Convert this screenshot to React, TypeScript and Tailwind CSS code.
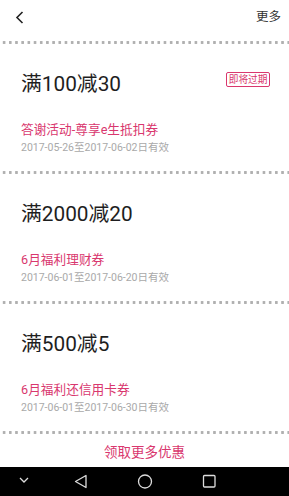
import React from "react";

const font = { fontFamily: 'Roboto, "Noto Sans CJK SC", "Noto Sans", sans-serif' };

function Dots() {
  return (
    <div className="h-[3px] w-full bg-[radial-gradient(circle,#b0b0b0_1.3px,transparent_1.7px)] bg-[length:6.2px_3px] bg-[position:1px_0px]" />
  );
}

type Coupon = { title: string; name: string; date: string; badge?: boolean };

const coupons: Coupon[] = [
  { title: "满100减30", name: "答谢活动-尊享e生抵扣券", date: "2017-05-26至2017-06-02日有效", badge: true },
  { title: "满2000减20", name: "6月福利理财券", date: "2017-06-01至2017-06-20日有效" },
  { title: "满500减5", name: "6月福利还信用卡券", date: "2017-06-01至2017-06-30日有效" },
];

function Card({ c }: { c: Coupon }) {
  return (
    <div className="h-[127px] pt-[28px] pl-[21px] pr-[19px]">
      <div className="flex items-start justify-between">
        <div className="text-[20.8px] leading-[24px] text-[#1e1e1e]">{c.title}</div>
        {c.badge && (
          <div className="h-[15px] px-[1.5px] border border-[#d9376e] rounded-[2px] text-[9.7px] leading-[13px] text-[#d9376e]">
            即将过期
          </div>
        )}
      </div>
      <div className="mt-[25px] text-[12.7px] leading-[18px] text-[#d9376e]">{c.name}</div>
      <div className="mt-[2px] text-[10.5px] leading-[14px] text-[#a9a9a9]">{c.date}</div>
    </div>
  );
}

export default function App() {
  return (
    <div className="w-[289px] h-[496px] bg-white flex flex-col overflow-hidden" style={font}>
      <div className="h-[41px] flex items-center justify-between pl-[15px] pr-[8px]">
        <svg width="9" height="13" viewBox="0 0 9 13" className="-mt-[6px]">
          <path d="M7.5 1 L2 6.5 L7.5 12" fill="none" stroke="#222" strokeWidth="1.6" />
        </svg>
        <div className="text-[12.5px] text-[#333] -mt-[6px]">更多</div>
      </div>
      <Dots />
      {coupons.map((c, i) => (
        <React.Fragment key={i}>
          <Card c={c} />
          <Dots />
        </React.Fragment>
      ))}
      <div className="h-[33px] flex items-center justify-center pt-[3px] text-[13.5px] text-[#d9376e]">
        领取更多优惠
      </div>
      <div className="h-[29px] bg-black relative">
        <svg width="289" height="29" viewBox="0 0 289 29" className="absolute inset-0">
          <path d="M20 11 L24 15 L28 11" fill="none" stroke="#ddd" strokeWidth="1.3" />
          <path d="M86 8.5 L86 20.5 L75.5 14.5 Z" fill="none" stroke="#ddd" strokeWidth="1.3" strokeLinejoin="round" />
          <circle cx="145" cy="14.5" r="6.5" fill="none" stroke="#ddd" strokeWidth="1.3" />
          <rect x="203.5" y="8.5" width="11.5" height="11.5" rx="1" fill="none" stroke="#ddd" strokeWidth="1.3" />
        </svg>
      </div>
    </div>
  );
}
